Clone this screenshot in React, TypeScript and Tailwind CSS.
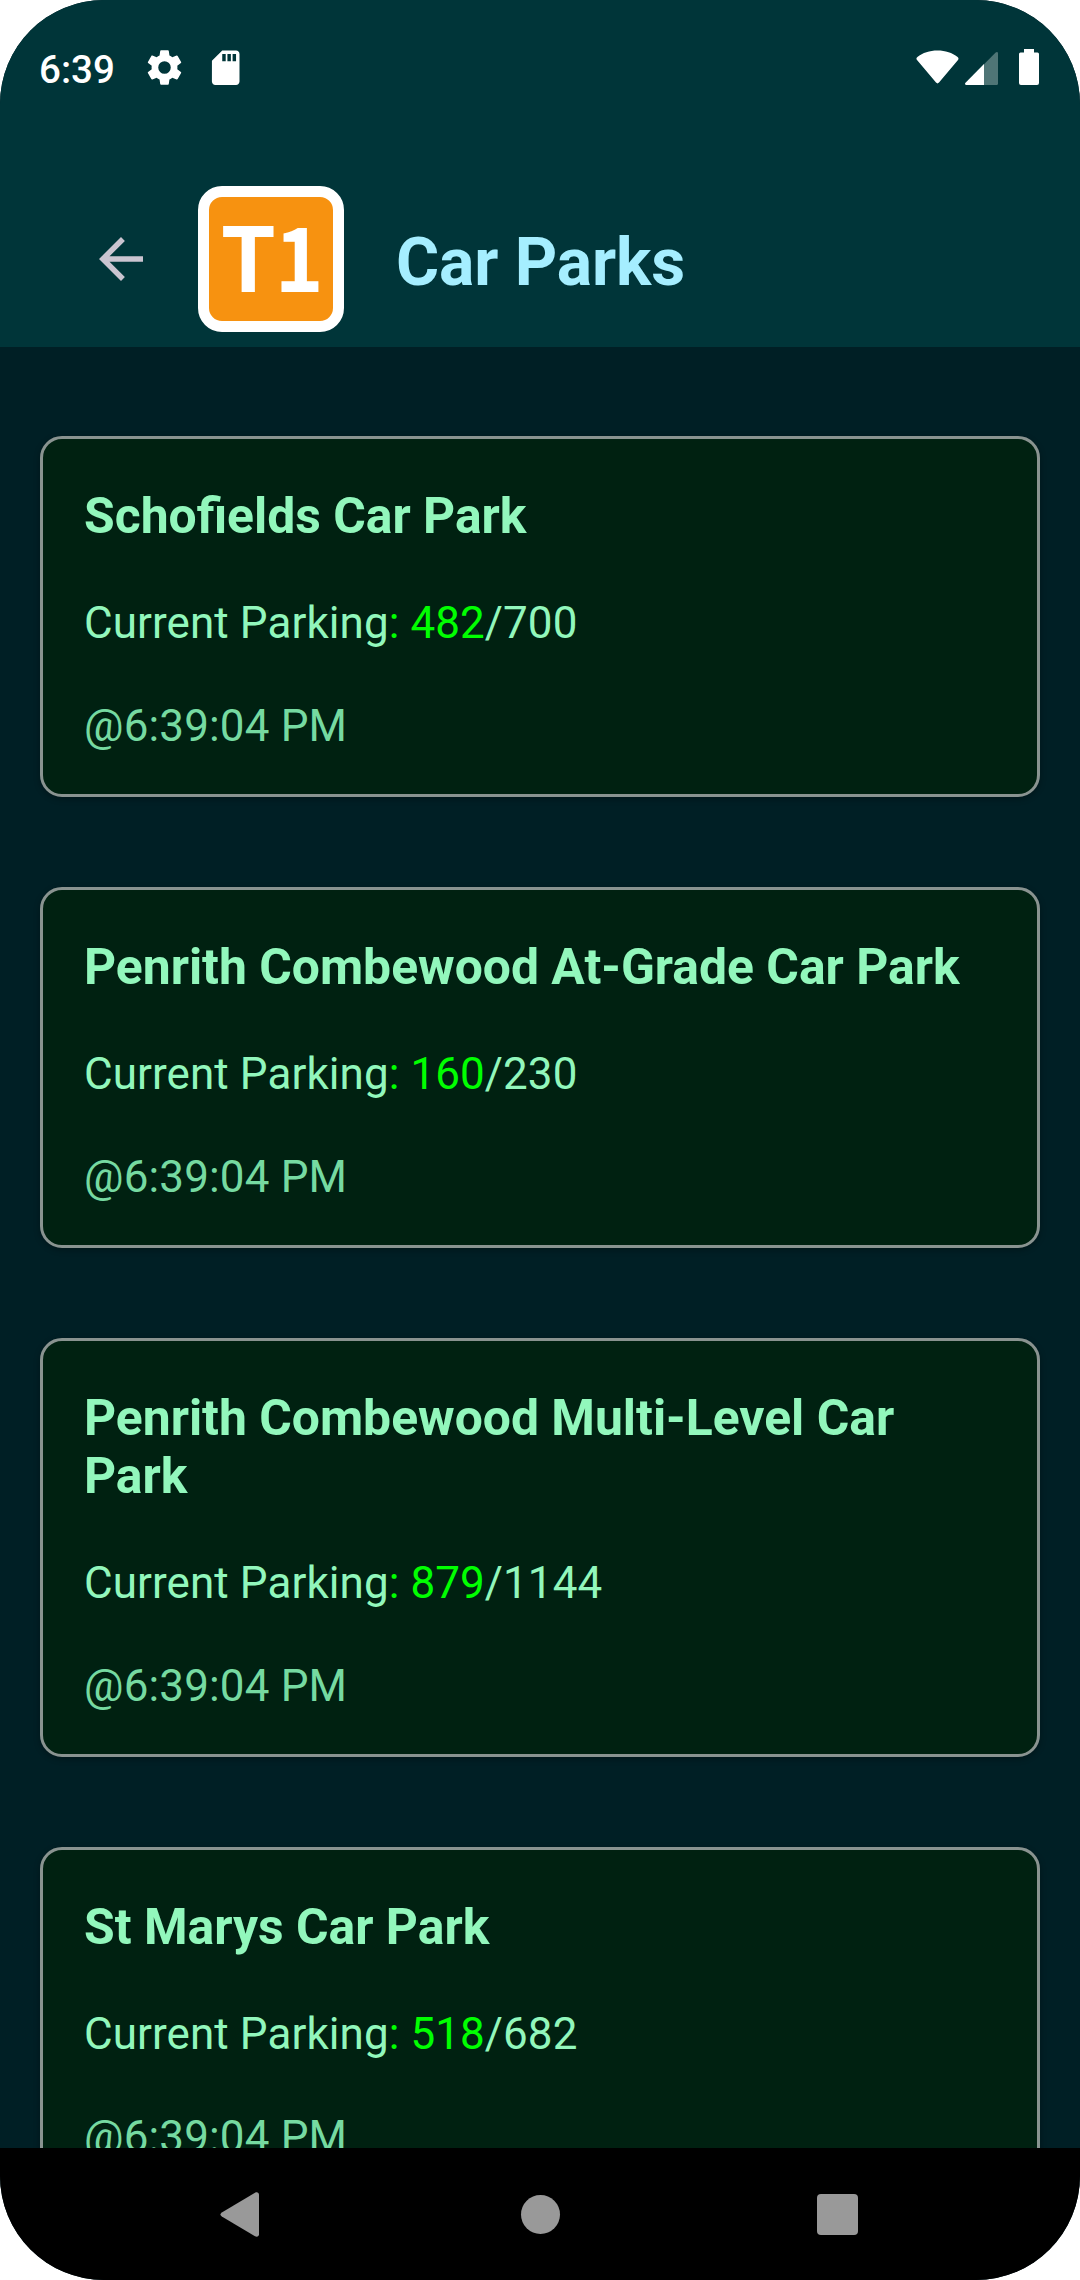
const parks = [
  { name: 'Schofields Car Park', used: '482', total: '700' },
  { name: 'Penrith Combewood At-Grade Car Park', used: '160', total: '230' },
  { name: 'Penrith Combewood Multi-Level Car Park', used: '879', total: '1144' },
  { name: 'St Marys Car Park', used: '518', total: '682' },
];

function StatusBar() {
  return (
    <div className="flex h-[136px] items-start justify-between pl-[39px] pr-[40px] text-white">
      <div className="flex items-start">
        <span className="mt-[47px] w-[104px] text-[38.5px] font-medium leading-[46px]">6:39</span>
        <svg className="mt-[46px] h-[43px] w-[43px]" viewBox="0 0 24 24" fill="currentColor">
          <path d="M19.14 12.94c.04-.3.06-.61.06-.94 0-.32-.02-.64-.07-.94l2.03-1.58a.49.49 0 0 0 .12-.61l-1.92-3.32a.488.488 0 0 0-.59-.22l-2.39.96c-.5-.38-1.03-.7-1.62-.94l-.36-2.54a.484.484 0 0 0-.48-.41h-3.84c-.24 0-.43.17-.47.41l-.36 2.54c-.59.24-1.13.57-1.62.94l-2.39-.96c-.22-.08-.47 0-.59.22L2.74 8.87c-.12.21-.08.47.12.61l2.03 1.58c-.05.3-.09.63-.09.94s.02.64.07.94l-2.03 1.58a.49.49 0 0 0-.12.61l1.92 3.32c.12.22.37.29.59.22l2.39-.96c.5.38 1.03.7 1.62.94l.36 2.54c.05.24.24.41.48.41h3.84c.24 0 .44-.17.47-.41l.36-2.54c.59-.24 1.13-.56 1.62-.94l2.39.96c.22.08.47 0 .59-.22l1.92-3.32c.12-.22.07-.47-.12-.61l-2.01-1.58zM12 15.5A3.5 3.5 0 1 1 12 8.500a3.5 3.5 0 0 1 0 7z" />
        </svg>
        <svg className="ml-[19px] mt-[46.5px] h-[41.4px] w-[41.4px]" viewBox="0 0 24 24" fill="currentColor">
          <path d="M18 2h-8L4.02 8 4 20c0 1.100.9 2 2 2h12c1.100 0 2-.9 2-2V4c0-1.100-.9-2-2-2zm-6 6.200h-2V4h2v4.200zm3 0h-2V4h2v4.200zm3 0h-2V4h2v4.200z" />
        </svg>
      </div>
      <svg className="mt-[49px] h-[37px] w-[124px]" viewBox="0 0 124 37" fill="currentColor">
        <path d="M1.400 7.900C6.800 3.700 13.500 1.400 21.500 1.400S36.200 3.700 41.600 7.900C42.700 8.800 42.700 10 42 11L23 33.600C22.100 34.700 20.900 34.700 20 33.600L1 11C.2 10 .2 8.800 1.400 7.900Z" />
        <path d="M79.700 3.500C80.800 2.400 82 2.900 82 4.400V34.500Q82 36 80.500 36H68V15.200Z" fill="#4f7576" />
        <path d="M68 15V36H50.500C49 36 48.500 34.800 49.500 33.700Z" />
        <path d="M108 0h10v3.500h3.500q1.500 0 1.500 1.500v29q0 2-2 2h-16q-2 0-2-2V5q0-1.500 1.500-1.500h3.500z" />
      </svg>
    </div>
  );
}

export default function App() {
  return (
    <div className="h-[2280px] w-[1080px] bg-white font-['Roboto',sans-serif]">
      <div className="flex h-full flex-col overflow-hidden rounded-[104px] bg-[#001f25]">
        <header className="h-[347px] shrink-0 bg-[#003539]">
          <StatusBar />
          <div className="flex items-center pl-[88px] pt-[50px]">
            <svg className="h-[66px] w-[66px] shrink-0" viewBox="0 0 24 24" fill="#cac4d0">
              <path d="M20 11H7.830l5.590-5.590L12 4l-8 8 8 8 1.410-1.410L7.830 13H20v-2z" />
            </svg>
            <div className="ml-[44px] flex h-[146px] w-[146px] shrink-0 items-center justify-center rounded-[24px] border-[11px] border-white bg-[#f79210] pb-[12px] pl-[4px] font-['Noto_Sans_CJK_SC',sans-serif] text-[89px] font-bold leading-none text-white">
              <span>T</span>
              <span className="-ml-[3px] scale-x-[0.93]">1</span>
            </div>
            <h1 className="ml-[52px] pt-[8px] text-[66px] font-bold leading-[78px] tracking-[-0.1px] text-[#a5eeff]">Car Parks</h1>
          </div>
        </header>
        <main className="flex min-h-0 flex-1 flex-col gap-[90px] overflow-hidden px-10 pt-[89px]">
          {parks.map((p) => (
            <section key={p.name} className="shrink-0 rounded-[22px] border-[3px] border-[#899390] bg-[#002111] px-[41px] pb-[42px] pt-[48px] text-[#92f7bc] shadow-[0_2px_6px_rgba(0,0,0,0.3)]">
              <h2 className="text-[49.83px] font-bold leading-[58px]">{p.name}</h2>
              <p className="mt-[52px] text-[44px] leading-[52px] tracking-[0.07px]">Current Parking<span className="text-[#00ff00]">: {p.used}</span>/{p.total}</p>
              <p className="mt-[51px] text-[44px] leading-[52px] tracking-[0.14px] text-[#76daa1]">@6:39:04 PM</p>
            </section>
          ))}
        </main>
        <nav className="flex h-[132px] shrink-0 items-center bg-black pl-[220px]">
          <svg className="h-[45px] w-[39px]" viewBox="0 0 39 45" fill="#999">
            <path d="M35 .8C37 -.3 39 .6 39 2.800V42.200C39 44.400 37 45.300 35 44.200L1.800 24.500C0 23.400 0 21.600 1.800 20.500Z" />
          </svg>
          <div className="ml-[262px] h-[39px] w-[39px] rounded-full bg-[#999]" />
          <div className="ml-[257px] h-[41px] w-[41px] rounded-[4px] bg-[#999]" />
        </nav>
      </div>
    </div>
  );
}
